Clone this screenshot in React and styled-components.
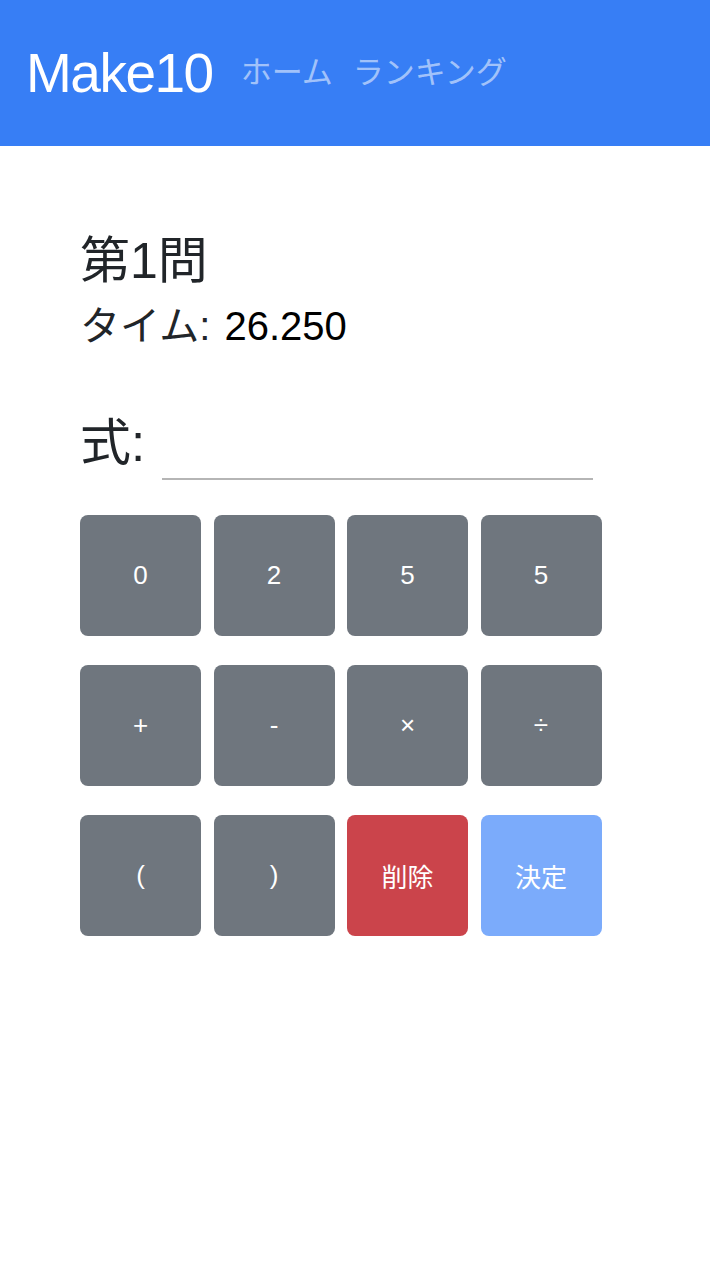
import styled, { createGlobalStyle } from "styled-components";

const GlobalStyle = createGlobalStyle`
  body {
    margin: 0;
    background: #fff;
    font-family: "Liberation Sans", "Noto Sans CJK JP", sans-serif;
    color: #212529;
  }
`;

const keys = [
  { label: "0" },
  { label: "2" },
  { label: "5" },
  { label: "5" },
  { label: "+" },
  { label: "-" },
  { label: "×" },
  { label: "÷" },
  { label: "(" },
  { label: ")" },
  { label: "削除", kind: "danger" },
  { label: "決定", kind: "primary" },
];

function App() {
  return (
    <>
      <GlobalStyle />
      <Navbar>
        <Brand>Make10</Brand>
        <NavLinks>
          <NavLink href="#">ホーム</NavLink>
          <NavLink href="#">ランキング</NavLink>
        </NavLinks>
      </Navbar>
      <Main>
        <Title>第1問</Title>
        <Time>
          タイム: <span>26.250</span>
        </Time>
        <FormRow>
          <Label htmlFor="expr">式:</Label>
          <ExprInput id="expr" type="text" readOnly />
        </FormRow>
        <Keypad>
          {keys.map((k, i) => (
            <Key key={i} $kind={k.kind}>
              {k.label}
            </Key>
          ))}
        </Keypad>
      </Main>
    </>
  );
}

export default App;

const Navbar = styled.nav`
  height: 146px;
  background: #377ef5;
  display: flex;
  align-items: center;
  padding: 0 26px;
  box-sizing: border-box;
`;

const Brand = styled.div`
  color: #fff;
  font-size: 55px;
  line-height: 60px;
  margin-right: 28px;
  letter-spacing: -1.5px;
`;

const NavLinks = styled.div`
  display: flex;
  gap: 20px;
`;

const NavLink = styled.a`
  color: rgba(255, 255, 255, 0.55);
  text-decoration: none;
  font-size: 31px;
  line-height: 40px;
`;

const Main = styled.main`
  padding: 0 80px;
`;

const Title = styled.h1`
  margin: 85px 0 0;
  font-size: 50px;
  font-weight: 400;
  line-height: 60px;
`;

const Time = styled.div`
  margin-top: 11px;
  font-size: 40px;
  line-height: 48px;
  span {
    color: #000;
    margin-left: 3px;
  }
`;

const FormRow = styled.div`
  margin-top: 64px;
  display: flex;
  align-items: flex-end;
  gap: 17px;
`;

const Label = styled.label`
  font-size: 51px;
  line-height: 60px;
  padding-bottom: 6px;
`;

const ExprInput = styled.input`
  width: 431px;
  height: 40px;
  border: none;
  border-bottom: 2px solid #b5b5b5;
  outline: none;
  padding: 0;
  font-size: 30px;
  background: transparent;
`;

const Keypad = styled.div`
  margin-top: 35px;
  display: grid;
  grid-template-columns: repeat(4, 121px);
  column-gap: 12.5px;
  row-gap: 29px;
`;

const Key = styled.button`
  height: 121px;
  border: none;
  border-radius: 8px;
  color: #fff;
  font-family: "Liberation Sans", "Noto Sans CJK JP", sans-serif;
  font-size: 26px;
  background: ${({ $kind }) =>
    $kind === "danger" ? "#cb444b" : $kind === "primary" ? "#7babfb" : "#6f767e"};
  display: flex;
  align-items: center;
  justify-content: center;
  padding: 0;
`;
